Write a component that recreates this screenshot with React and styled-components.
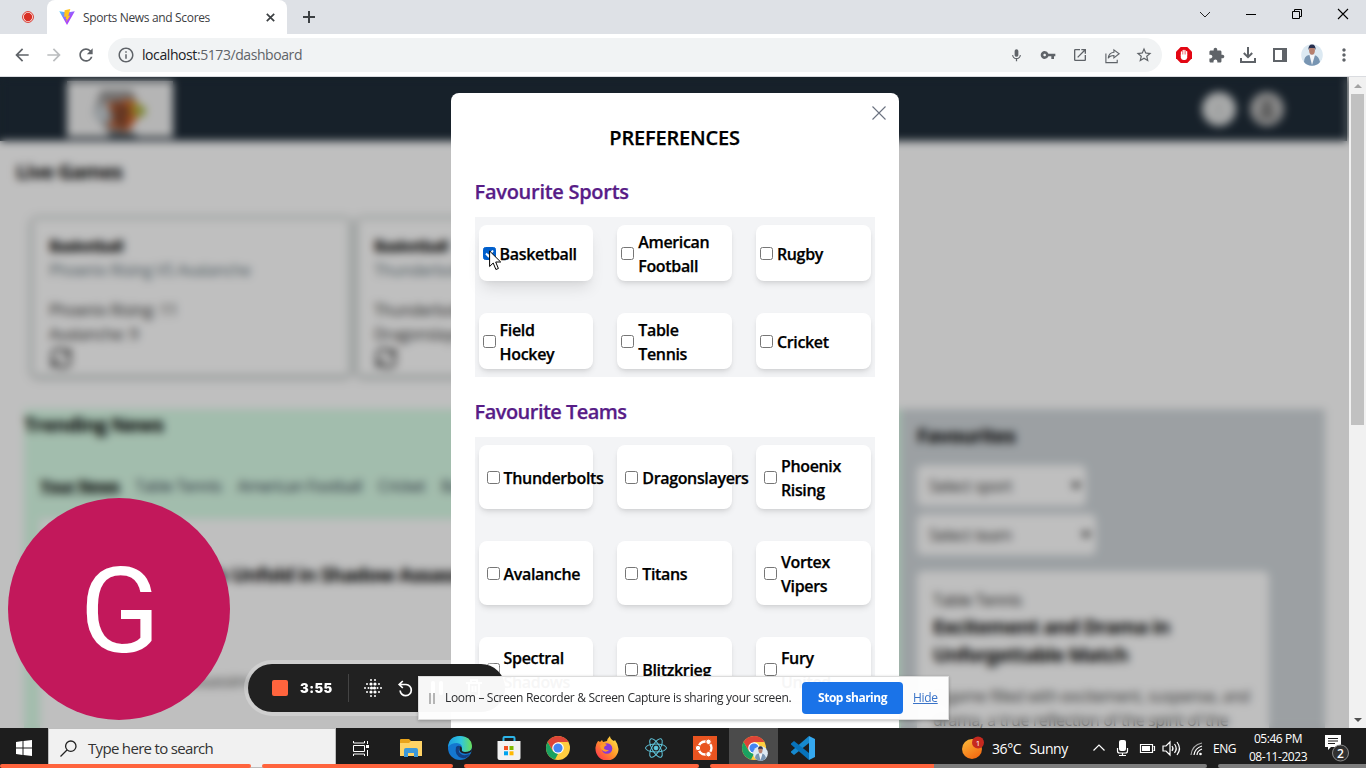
import React from "react";
import styled, { createGlobalStyle } from "styled-components";
import {
  MdArrowBack, MdArrowForward, MdRefresh, MdInfoOutline, MdMic, MdVpnKey, MdOpenInNew,
  MdStarBorder, MdMoreVert,
} from "react-icons/md";

const GlobalStyle = createGlobalStyle`
  * { box-sizing: border-box; }
  body { margin: 0; overflow: hidden; font-family: "Open Sans", "Noto Sans", sans-serif; }
  h1, h2, h3, p { margin: 0; }
  svg { display: block; flex-shrink: 0; }
`;

/* ---------- browser window ---------- */
const Desktop = styled.div`
  position: relative;
  width: 1366px;
  height: 768px;
  overflow: hidden;
  display: flex;
  flex-direction: column;
  background: #fff;
`;
const TabStrip = styled.header`
  height: 34px;
  flex: none;
  display: flex;
  background: #dee1e6;
`;
const PinnedTab = styled.div`
  width: 47px;
  padding: 11px 0 0 22px;
`;
const Tab = styled.div`
  width: 240px;
  height: 34px;
  display: flex;
  align-items: center;
  padding: 0 12px 0 12px;
  background: #fff;
  border-radius: 8px 8px 0 0;
  color: #3c4043;
`;
const TabTitle = styled.span`
  flex: 1;
  margin-left: 8px;
  font-size: 12px;
  letter-spacing: -0.34px;
  white-space: nowrap;
`;
const NewTab = styled.div`
  padding: 11px 0 0 16px;
  flex: 1;
`;
const WindowButtons = styled.div`
  display: flex;
  padding: 7px 15px 0 0;
  gap: 30px;
`;
const Toolbar = styled.div`
  height: 43px;
  flex: none;
  display: flex;
  align-items: center;
  padding: 0 6px 0 12px;
  border-bottom: 1px solid #dadce0;
  background: #fff;
  color: #5f6368;
`;
const NavButtons = styled.div`
  display: flex;
  gap: 12px;
  margin-right: 12px;
`;
const AddressBar = styled.div`
  width: 1054px;
  height: 34px;
  border-radius: 17px;
  background: #f1f3f4;
  display: flex;
  align-items: center;
  padding: 0 2px 0 9px;
`;
const Url = styled.span`
  flex: 1;
  margin-left: 7px;
  padding-bottom: 1px;
  font-size: 14px;
  letter-spacing: -0.42px;
  color: #5f6368;
  b { font-weight: 400; color: #202124; }
`;
const IconRow = styled.div`
  display: flex;
  align-items: center;
  margin-left: ${(p) => p.$left || 0}px;
`;
const IconSlot = styled.span`
  width: 32px;
  display: flex;
  justify-content: center;
`;
const Viewport = styled.div`
  position: relative;
  height: 651px;
  display: flex;
  overflow: hidden;
`;
const ScrollBar = styled.div`
  width: 17px;
  height: 651px;
  background: #f1f1f1;
  display: flex;
  flex-direction: column;
  align-items: center;
  padding: 7px 0 6px;
`;
const ScrollThumb = styled.div`
  width: 13px;
  height: 331px;
  margin: 6px 0 auto;
  background: #c1c1c1;
`;
const Arrow = styled.i`
  border: 4px solid transparent;
  border-width: ${(p) => (p.$down ? "4px 4px 0" : "0 4px 4px")};
  border-top-color: ${(p) => (p.$down ? "#505050" : "transparent")};
  border-bottom-color: ${(p) => (p.$down ? "transparent" : "#a3a3a3")};
`;

/* ---------- dashboard page ---------- */
const Page = styled.div`
  position: relative;
  width: 1349px;
  height: 651px;
  overflow: hidden;
  background: #fff;
  color: #000;
  font-size: 16px;
  line-height: 24px;
  letter-spacing: -0.37px;
`;
const SiteHeader = styled.div`
  width: 1347px;
  height: 64px;
  background: #1f2c38;
  display: flex;
  align-items: center;
  justify-content: space-between;
  padding: 0 63px 0 67px;
`;
const SiteLogo = styled.div`
  width: 106px;
  height: 56px;
  background: #f2f2f2;
  padding-left: 22px;
`;
const HeaderIcons = styled.div`
  display: flex;
  gap: 14px;
`;
const SectionTitle = styled.h2`
  font-size: 20px;
  line-height: 28px;
  font-weight: 700;
  letter-spacing: -0.75px;
`;
const LiveSection = styled.section`
  padding: 17px 16px 0;
`;
const GameRow = styled.div`
  display: flex;
  gap: 7px;
  padding: 32px 16px 0;
`;
const GameCard = styled.article`
  width: 318px;
  height: 158px;
  border: 2px solid #dfe4e2;
  border-radius: 6px;
  padding: 14px 15px;
  box-shadow: 0 1px 5px 2px rgba(60, 80, 75, 0.33);
  h3 { font-size: 16px; font-weight: 700; letter-spacing: -1.05px; }
  p { color: #333; }
`;
const Versus = styled.p`
  && { color: #60727a; margin-bottom: 16px; }
`;
const Columns = styled.div`
  display: flex;
  padding: 33px 24px 0;
`;
const Trending = styled.section`
  width: 877px;
  height: 600px;
  background: #d9fce7;
  padding-top: 2px;
`;
const NewsTabs = styled.nav`
  display: flex;
  gap: 16px;
  padding: 35px 16px 0;
  color: #374151;
  white-space: nowrap;
  letter-spacing: -0.62px;
  b { color: #000; text-decoration: underline; letter-spacing: -0.75px; }
`;
const NewsPanel = styled.div`
  margin: 21px 16px 0;
  height: 500px;
  background: #fff;
  padding: 42px 38px;
  p { margin-top: 80px; color: #555; padding-left: 46px; }
`;
const FavPanel = styled.section`
  width: 424px;
  height: 600px;
  background: #d0d6da;
  padding: 13px 16px;
`;
const Select = styled.div`
  width: ${(p) => p.$width}px;
  height: 41px;
  margin-top: ${(p) => p.$top}px;
  padding: 0 5px 0 12px;
  display: flex;
  align-items: center;
  justify-content: space-between;
  border-radius: 6px;
  background: #fff;
  color: #333;
`;
const SelectArrow = styled.i`
  border: 5px solid transparent;
  border-width: 6px 5px 0;
  border-top-color: #111;
`;
const FavArticle = styled.article`
  width: 352px;
  height: 300px;
  margin-top: 16px;
  padding: 17px 16px;
  border-radius: 6px;
  background: #fff;
  h3 { font-size: 20px; line-height: 28px; letter-spacing: -0.72px; margin: 1px 0 15px; }
  p { color: #444; white-space: nowrap; letter-spacing: -0.41px; }
`;
const Category = styled.p`
  && { color: #1c1c1c; }
`;
const Backdrop = styled.div`
  position: absolute;
  inset: 0;
  background: rgba(0, 0, 0, 0.25);
  backdrop-filter: blur(4px);
`;

/* ---------- preferences dialog ---------- */
const Dialog = styled.div`
  position: absolute;
  left: 450.6px;
  top: 16px;
  width: 448px;
  height: 700px;
  padding: 0 24px;
  border-radius: 8px;
  background: #fff;
  font-size: 16px;
  line-height: 24px;
`;
const DialogClose = styled.div`
  display: flex;
  justify-content: flex-end;
  height: 31px;
  margin-right: -11.4px;
  padding-top: 13px;
`;
const DialogTitle = styled.h1`
  font-size: 20px;
  line-height: 28px;
  font-weight: 600;
  letter-spacing: -0.18px;
  -webkit-text-stroke: 0.25px #000;
  text-align: center;
`;
const GroupTitle = styled.h2`
  margin: ${(p) => p.$top}px 0 11px;
  font-size: 20px;
  line-height: 28px;
  font-weight: 600;
  letter-spacing: ${(p) => p.$spacing}px;
  -webkit-text-stroke: 0.25px #581c87;
  color: #581c87;
`;
const OptionGrid = styled.div`
  display: grid;
  grid-template-columns: repeat(3, minmax(0, 1fr));
  gap: 32px 24px;
  padding: 8px 4px;
  background: #f3f4f6;
`;
const Option = styled.label`
  height: ${(p) => (p.$pad ? 64 : 56)}px;
  padding: 0 ${(p) => (p.$pad ? 8 : 4)}px;
  display: flex;
  align-items: center;
  gap: 4px;
  border-radius: 8px;
  background: #fff;
  font-weight: 600;
  letter-spacing: -0.34px;
  -webkit-text-stroke: 0.25px #000;
  box-shadow: ${(p) => (p.$raised
    ? "0 10px 15px -3px rgba(0,0,0,.1), 0 4px 6px -4px rgba(0,0,0,.1)"
    : "0 4px 6px -1px rgba(0,0,0,.1), 0 2px 4px -2px rgba(0,0,0,.1)")};
`;
const OptionName = styled.span`
  padding-top: 1px;
`;
const Check = styled.span`
  flex: none;
  width: 13px;
  height: 13px;
  border: 1px solid ${(p) => (p.$on ? "#005fcc" : "#767676")};
  border-radius: 2.5px;
  background: ${(p) => (p.$on ? "#005fcc" : "#fff")};
`;

/* ---------- recorder overlays ---------- */
const Avatar = styled.div`
  position: absolute;
  left: 8px;
  top: 498px;
  width: 222px;
  height: 222px;
  padding-left: 2px;
  border-radius: 50%;
  background: #c2185b;
  color: #fff;
  font: 400 118px/228px Roboto, sans-serif;
  text-align: center;
`;
const Recorder = styled.div`
  position: absolute;
  left: 248px;
  top: 664px;
  width: 257px;
  height: 48px;
  border-radius: 24px;
  background: #212121;
  box-shadow: 0 0 0 4px rgba(255, 255, 255, 0.25);
  display: flex;
  align-items: center;
  padding-left: 24px;
  color: #fff;
`;
const StopSquare = styled.i`
  width: 16px;
  height: 16px;
  border-radius: 2px;
  background: #ff643d;
`;
const Timer = styled.span`
  width: 48px;
  margin-left: 12px;
  font: 900 13px/16px Inter, sans-serif;
  letter-spacing: 0.45px;
`;
const RecorderRule = styled.i`
  width: 1px;
  height: 28px;
  background: #444;
  margin-right: 15px;
`;
const RecorderTools = styled.div`
  display: flex;
  align-items: center;
`;
const Tool = styled.span`
  margin-left: ${(p) => p.$gap}px;
`;
const ShareBar = styled.div`
  position: absolute;
  left: 418px;
  top: 676px;
  width: 531px;
  height: 44px;
  display: flex;
  align-items: center;
  padding-left: 10px;
  border: 1px solid #dcdcdc;
  background: rgba(255, 255, 255, 0.965);
  box-shadow: 0 1px 3px rgba(0, 0, 0, 0.25);
  font-size: 12px;
  letter-spacing: -0.31px;
  color: #2b2c2e;
  white-space: nowrap;
`;
const Grip = styled.i`
  width: 6px;
  height: 11px;
  border: solid #b5b5b5;
  border-width: 0 2px;
  margin-right: 10px;
`;
const ShareText = styled.span`
  width: 357px;
  padding-bottom: 1px;
`;
const StopButton = styled.button`
  width: 101px;
  height: 32px;
  padding: 0 0 1px;
  border: 0;
  border-radius: 4px;
  background: #1a73e8;
  color: #fff;
  font: 700 12px "Open Sans", sans-serif;
  letter-spacing: -0.5px;
`;
const HideLink = styled.span`
  margin-left: 10px;
  padding-bottom: 1px;
  color: #3973c8;
  text-decoration: underline;
`;
const Progress = styled.div`
  position: absolute;
  left: 0;
  top: 764px;
  width: 1366px;
  height: 4px;
  display: flex;
  gap: 11px;
`;
const Segment = styled.i`
  flex: none;
  width: ${(p) => p.$width}px;
  border-radius: 2px;
  background: linear-gradient(90deg, #ff643d ${(p) => p.$filled}px, #7d7d7d ${(p) => p.$filled}px);
`;
const Pointer = styled.svg`
  position: absolute;
  left: 489px;
  top: 250px;
`;

/* ---------- taskbar ---------- */
const Taskbar = styled.footer`
  height: 40px;
  flex: none;
  display: flex;
  background: #1d1d1d;
  color: #fff;
`;
const StartButton = styled.div`
  width: 48px;
  padding: 12px 0 0 16px;
`;
const SearchBox = styled.div`
  width: 288px;
  height: 40px;
  display: flex;
  align-items: center;
  gap: 11px;
  padding-left: 11px;
  border: 1px solid #bdbdbd;
  background: #f1f1f1;
  color: #333;
  font-size: 15px;
  letter-spacing: -0.68px;
`;
const Apps = styled.div`
  display: flex;
  flex: 1;
`;
const AppButton = styled.div`
  width: ${(p) => p.$width || 49}px;
  height: 40px;
  display: flex;
  justify-content: center;
  align-items: center;
  background: ${(p) => (p.$active ? "#4b4b4b" : "transparent")};
`;
const Tray = styled.div`
  display: flex;
  align-items: center;
  width: 404px;
  font-size: 14px;
  white-space: nowrap;
`;
const Weather = styled.span`
  width: 77px;
  margin: 0 24px 0 8px;
  letter-spacing: -0.4px;
  word-spacing: 5px;
`;
const Language = styled.span`
  width: 23px;
  margin: 0 12px 0 10px;
  font-size: 12px;
  letter-spacing: -0.5px;
`;
const Clock = styled.span`
  width: 60px;
  margin-right: 17px;
  font-size: 12px;
  line-height: 18px;
  letter-spacing: -0.45px;
  text-align: center;
`;

/* ---------- drawings ---------- */
const RecordIcon = () => (
  <svg width="12" height="12" viewBox="0 0 12 12"><circle cx="6" cy="6" r="5.4" fill="#fff" stroke="#d93025" strokeWidth="1" /><circle cx="6" cy="6" r="4.2" fill="#d93025" /></svg>
);
const ViteIcon = () => (
  <svg width="16" height="16" viewBox="0 0 16 16">
    <defs><linearGradient id="vite" x1="0" y1="0" x2="1" y2="1"><stop stopColor="#41d1ff" /><stop offset=".55" stopColor="#a24bfd" /><stop offset="1" stopColor="#bd34fe" /></linearGradient></defs>
    <path d="M.3 2.2 8 16 15.8 2.2 8 3.6Z" fill="url(#vite)" /><path d="M11.3.1 5.6 1.2 5.2 8l2-.4-.6 2.7 1.3-.4-.8 3.4 4.2-6.8-2 .4Z" fill="#ffc31f" />
  </svg>
);
const TabClose = () => <svg width="9" height="9" viewBox="0 0 9 9" stroke="#3c4043" strokeWidth="1.7"><path d="m.8.8 7.4 7.4M8.200.8.8 8.200" /></svg>;
const Plus = () => <svg width="12" height="12" viewBox="0 0 12 12" stroke="#3c4043" strokeWidth="2"><path d="M6 0v12M0 6h12" /></svg>;
const ShareIcon = () => (
  <svg width="17" height="17" viewBox="0 0 18 18" fill="none" stroke="#5f6368" strokeWidth="1.2"><path d="M2 7v9.500h12v-3M10.500 3l5.500 4.200-5.500 4.300V9C7.500 9 5.500 10 4.500 12c.2-3.500 2-6 6-6.500Z" /></svg>
);
const AdblockIcon = () => (
  <svg width="16" height="16" viewBox="0 0 16 16"><path d="M4.700 0h6.600L16 4.700v6.600L11.300 16H4.700L0 11.300V4.700Z" fill="#e30613" /><path d="M5.500 9V4.800M7.200 8V3.300M8.900 8V3.300M10.600 8V4.600" stroke="#fff" strokeWidth="1.300" strokeLinecap="round" /><path d="M4.800 7.500h6.400v3.300q-.5 2.300-2.400 2.300H7.500Q5.500 13 4.800 10.800Z" fill="#fff" /></svg>
);
const ExtensionIcon = () => (
  <svg width="17" height="17" viewBox="0 0 24 24" fill="#5f6368"><path d="M20.500 11H19V7c0-1.100-.9-2-2-2h-4V3.500C13 2.120 11.880 1 10.500 1S8 2.120 8 3.500V5H4c-1.100 0-1.990.9-1.990 2v3.800H3.500c1.490 0 2.700 1.210 2.700 2.700s-1.210 2.700-2.700 2.700H2V20c0 1.100.9 2 2 2h3.800v-1.500c0-1.490 1.210-2.700 2.700-2.700s2.700 1.210 2.700 2.700V22H17c1.100 0 2-.9 2-2v-4h1.500c1.380 0 2.500-1.120 2.500-2.500S21.880 11 20.500 11z" /></svg>
);
const DownloadIcon = () => (
  <svg width="18" height="18" viewBox="0 0 18 18" fill="none" stroke="#5f6368" strokeWidth="2"><path d="M9 1v10M4.800 7 9 11.200 13.200 7M2 12v4h14v-4" /></svg>
);
const PanelIcon = () => (
  <svg width="14" height="14" viewBox="0 0 14 14"><path d="M0 0h14v14H0zM2 2v10h7V2z" fill="#5f6368" fillRule="evenodd" /></svg>
);
const Portrait = ({ size = 22 }) => (
  <svg width={size} height={size} viewBox="0 0 22 22"><circle cx="11" cy="11" r="10.800" fill="#dce9f2" /><path d="M3 18q0-6 5-7h5q5 1 6 7-3 3.800-8 3.800T3 18Z" fill="#7895b2" /><path d="m8.500 11 2.500 10 3-10Z" fill="#f4f5f8" /><ellipse cx="11" cy="6.300" rx="2.900" ry="4.400" fill="#b77f6d" /><path d="M7.500 6Q7 .4 11 .4T14.500 6L13.500 4h-5Z" fill="#28304f" /></svg>
);
const CaretDown = () => <svg width="16" height="16" viewBox="0 0 16 16" fill="none" stroke="#222"><path d="m3 5 5 5 5-5" /></svg>;
const Minimize = () => <svg width="16" height="16" viewBox="0 0 16 16"><path d="M3 7.500h10" stroke="#000" /></svg>;
const Restore = () => <svg width="16" height="16" viewBox="0 0 16 16" fill="none" stroke="#000"><path d="M3.500 4.500h7v7h-7zM5.500 4.500v-2h7v7h-2" /></svg>;
const CloseWindow = () => <svg width="16" height="16" viewBox="0 0 16 16" stroke="#000" strokeWidth="1.100"><path d="m3 2 10 10M13 2 3 12" /></svg>;

const LogoDrawing = () => (
  <svg width="62" height="56" viewBox="0 0 62 56"><path d="M12 9h31l6 14-8 26-8 7H22l-9-13-9-10Z" fill="#999" /><path d="M4 30l12-9 15 8-10 11H9Z" fill="#c7cfd4" /><path d="m17 22 27-4 8 14-13 18-20-4 7-12Z" fill="#c95a28" /><path d="m21 31 8 6 12-9M25 23l10 5M28 45l10-5" stroke="#493c37" strokeWidth="4" fill="none" /><path d="m41 19 11 6-10 13Z" fill="#d9921c" /><circle cx="51" cy="30" r="6" fill="#a4b444" /><path d="M20 52h27v4H20z" fill="#4b5961" /></svg>
);
const HeaderDisc = ({ color, inner }) => <svg width="34" height="34" viewBox="0 0 34 34"><circle cx="17" cy="17" r="17" fill={color} /><circle cx="17" cy="13" r="5" fill={inner} /><path d="M9 26q1-8 8-8t8 8Z" fill={inner} /></svg>;
const RefreshDrawing = () => <svg width="24" height="24" viewBox="0 0 24 24" fill="none" stroke="#111" strokeWidth="2.100"><path d="M2 11Q3 3 11 3q5 0 9 5M21 3v6h-6M22 13q-1 8-9 8-5 0-9-5M3 21v-6h6" /></svg>;
const CheckMark = () => <svg width="11" height="11" viewBox="0 0 11 11" fill="none" stroke="#fff" strokeWidth="2"><path d="m2 5.500 2.500 2.700L9 2.500" /></svg>;

const DotsIcon = () => (
  <svg width="18" height="18" viewBox="0 0 18 18" fill="#fff">
    {[[7, 1], [11, 1], [3, 5], [7, 5], [11, 5], [15, 5], [1, 9], [4.5, 9], [7.5, 9], [10.5, 9], [13.5, 9], [17, 9], [3, 13], [7, 13], [11, 13], [15, 13], [7, 17], [11, 17]].map(([x, y]) => (
      <circle key={`${x}-${y}`} cx={x} cy={y} r={x > 5 && x < 13 && y > 3 && y < 15 ? 1.6 : 1} />
    ))}
  </svg>
);
const RestartIcon = () => <svg width="16" height="17" viewBox="0 0 16 17" fill="none" stroke="#fff" strokeWidth="1.7"><path d="M2.500 4.500H9a5.600 5.600 0 1 1-5.900 6M5.800 1 2.200 4.500l3.600 3.500" /></svg>;
const PauseIcon = () => <svg width="14" height="16" viewBox="0 0 14 16" stroke="#fff" strokeWidth="4" strokeLinecap="round"><path d="M3 3v10M11 3v10" /></svg>;
const TrashIcon = () => <svg width="16" height="18" viewBox="0 0 16 18" fill="none" stroke="#fff" strokeWidth="2"><path d="M0 4h16M5 4V1h6v3M3 4v13h10V4M6.500 7v6M9.500 7v6" /></svg>;

const TaskView = () => <svg width="18" height="17" viewBox="0 0 18 17" fill="none" stroke="#fff"><path d="M1.500 1v2h11V1M1.500 5.500h11v6h-11zM1.500 16v-2h11v2M15.500 1v3M15.500 10v6" /><path d="M14 5h3v3h-3z" fill="#fff" stroke="none" /></svg>;
const Explorer = () => <svg width="22" height="18" viewBox="0 0 22 18"><path d="M0 1q0-1 1-1h8l2 2h10q1 0 1 1v4H0Z" fill="#eaa41b" /><path d="M0 4h9l2-2h11v15H0Z" fill="#ffd365" /><path d="M4 18v-7q0-2 2-2h10q2 0 2 2v7h-4v-4H8v4Z" fill="#3d98d8" /></svg>;
const Edge = () => (
  <svg width="24" height="24" viewBox="0 0 24 24"><defs><linearGradient id="edge"><stop stopColor="#1b9de2" /><stop offset=".55" stopColor="#31c6dc" /><stop offset="1" stopColor="#6bdf55" /></linearGradient></defs>
    <circle cx="12" cy="12" r="12" fill="#1477cf" /><path d="M0 11Q1 0 12 0t12 10q0 6-7 6-4 0-3-3 1-5-5-6-6 0-9 4Z" fill="url(#edge)" /><path d="M8 11q-2 9 6 11 5 1 8-4-8 3-11-2-1-3 1-6-2-1-4 1Z" fill="#123f83" /><path d="M12 10q-2 5 2 7 5 2 9-1 1-1 1-4-1 4-7 4-4 0-3-3 0-2-2-3Z" fill="#1d1d1d" /></svg>
);
const Store = () => <svg width="24" height="24" viewBox="0 0 24 24"><path d="M6.500 6V2q0-1 1-1h9q1 0 1 1v4" fill="none" stroke="#2cb4e8" strokeWidth="2" /><path d="M.5 5h23v17q0 2-2 2h-19q-2 0-2-2Z" fill="#f2f2f2" /><path d="M7 10h4v4H7z" fill="#f25022" /><path d="M12.500 10h4v4h-4z" fill="#7fba00" /><path d="M7 15.300h4v4H7z" fill="#00a4ef" /><path d="M12.500 15.300h4v4h-4z" fill="#ffb900" /></svg>;
const Chrome = ({ withPortrait }) => (
  <svg width="24" height="24" viewBox="0 1 24 24" overflow="visible"><circle cx="12" cy="13" r="12" fill="#ffcd40" /><path d="M1.600 7A12 12 0 0 1 22.400 7H12L6.800 16Z" fill="#dd4437" /><path d="M1.600 7 6.800 16 12 19l-3 5.600A12 12 0 0 1 1.600 7Z" fill="#1ba261" /><circle cx="12" cy="13" r="5.800" fill="#fff" /><circle cx="12" cy="13" r="4.600" fill="#4285f4" />{withPortrait && <g transform="translate(11 11)"><Portrait size={15} /></g>}</svg>
);
const Firefox = () => (
  <svg width="24" height="24" viewBox="0 0 24 24"><defs><linearGradient id="fox" x1="1" y1="0" x2="0" y2="1"><stop stopColor="#fff44f" /><stop offset=".5" stopColor="#ff9328" /><stop offset="1" stopColor="#ff2457" /></linearGradient></defs><path d="M3 5q1 0 2 1l2-2 1 2 4-1q0-2 3-5 0 3 4 5l1-1q3 4 3.500 9A11.500 11.500 0 0 1 .5 13Q0 9 3 5Z" fill="url(#fox)" /><circle cx="12" cy="12.500" r="5.300" fill="#8738d8" /><path d="M5 10q3-4 7-1-3 1-3 3t5 2q-4 4-8-1Z" fill="#ff9a29" /></svg>
);
const ReactMark = () => <svg width="22" height="22" viewBox="-11 -11 22 22" fill="none" stroke="#61c9df" strokeWidth="1"><circle r="1.900" fill="#61c9df" /><ellipse rx="10.500" ry="4" /><ellipse rx="10.500" ry="4" transform="rotate(60)" /><ellipse rx="10.500" ry="4" transform="rotate(120)" /></svg>;
const Ubuntu = () => <svg width="24" height="24" viewBox="0 0 24 24"><path fill="#e95420" d="M0 0h24v24H0z" /><circle cx="12" cy="12" r="6.500" fill="none" stroke="#fff" strokeWidth="2.300" />{[[5, 12], [15.500, 5.800], [15.500, 18.200]].map(([x, y]) => <circle key={y} cx={x} cy={y} r="2.700" fill="#fff" stroke="#e95420" strokeWidth="1" />)}</svg>;
const VsCode = () => <svg width="24" height="24" viewBox="0 0 24 24"><path d="m18 0 6 3v18l-6 3Z" fill="#35a8ef" /><path d="M18 0v7L3 19l-3-2.500v-1Z" fill="#1689ce" /><path d="M18 24v-7L3 5 0 7.500v1Z" fill="#0873bb" /></svg>;
const WindowsMark = () => <svg width="16" height="16" viewBox="0 0 16 16" fill="#fff"><path d="m0 2 6.500-1v6.500H0ZM7.500.9 16 0v7.500H7.500ZM0 8.500h6.500V15L0 14ZM7.500 8.500H16V16l-8.500-1Z" /></svg>;
const SearchIcon = () => <svg width="17" height="17" viewBox="0 0 17 17" fill="none" stroke="#222" strokeWidth="1.300"><circle cx="10.800" cy="6.200" r="5.200" /><path d="m7 10-6.500 6.500" /></svg>;
const Sun = () => <svg width="22" height="24" viewBox="0 0 22 24"><defs><linearGradient id="sun" x2=".6" y2="1"><stop stopColor="#fbbd3c" /><stop offset="1" stopColor="#f46c12" /></linearGradient></defs><circle cx="10" cy="13" r="10" fill="url(#sun)" /><circle cx="16" cy="6.500" r="6" fill="#c5291f" /><text x="16" y="9.500" textAnchor="middle" fontSize="8" fill="#fff">1</text></svg>;
const TrayIcons = () => (
  <svg width="110" height="24" viewBox="0 0 110 24" fill="none" stroke="#fff" strokeWidth="1.200">
    <path d="m.5 14.500 5.500-5.500 5.500 5.500" /><rect x="26" y="4" width="7" height="11" rx="2" fill="#fff" stroke="none" /><path d="M24.500 12v3q0 2 2 2h6q2 0 2-2v-3M29.500 17v3M26 19.500h7" />
    <path d="M47.500 8.500h12v8h-12zM60.500 10.500h1v4h-1" /><path d="M49 10h8v5h-8z" fill="#fff" stroke="none" />
    <path d="M70 10h3l4-4v13l-4-4h-3zM79 10q2 2.500 0 5M81.500 8q3.500 4.500 0 9M84 6q5 6.500 0 13" />
    <g stroke="#aaa"><path d="M98 19Q99 9 109 7" /><path d="M101 19q1-7 8-9M104 19q0-4 5-6" stroke="#fff" /></g><circle cx="107.500" cy="18" r="1.300" fill="#fff" stroke="none" />
  </svg>
);
const Notifications = () => <svg width="26" height="28" viewBox="0 -1 26 28"><path d="M0 0h16v12H6l-3 3v-3H0Z" fill="#fff" /><path d="M3 3.500h10M3 6h10M3 8.500h7" stroke="#1d1d1d" /><circle cx="15.500" cy="18" r="8" fill="#303030" stroke="#8a8a8a" /><text x="15.500" y="22.500" textAnchor="middle" fontSize="12" fontWeight="600" fill="#fff">2</text></svg>;

const SPORTS = ["Basketball", "American Football", "Rugby", "Field Hockey", "Table Tennis", "Cricket"];
const TEAMS = ["Thunderbolts", "Dragonslayers", "Phoenix Rising", "Avalanche", "Titans", "Vortex Vipers", "Spectral Shadows", "Blitzkrieg", "Fury United"];
const GAMES = [["Phoenix Rising", 11, "Avalanche", 9], ["Thunderbolts", 8, "Dragonslayers", 6]];

function PreferenceOption({ name, checked, roomy }) {
  return (
    <Option $pad={roomy} $raised={checked}>
      <Check $on={checked}>{checked && <CheckMark />}</Check>
      <OptionName>{name}</OptionName>
    </Option>
  );
}

export default function App() {
  return (
    <>
      <GlobalStyle />
      <Desktop>
        <TabStrip>
          <PinnedTab><RecordIcon /></PinnedTab>
          <Tab><ViteIcon /><TabTitle>Sports News and Scores</TabTitle><TabClose /></Tab>
          <NewTab><Plus /></NewTab>
          <WindowButtons><CaretDown /><Minimize /><Restore /><CloseWindow /></WindowButtons>
        </TabStrip>
        <Toolbar>
          <NavButtons><MdArrowBack size={20} /><MdArrowForward size={20} color="#bbbdbf" /><MdRefresh size={20} /></NavButtons>
          <AddressBar>
            <MdInfoOutline size={18} />
            <Url><b>localhost</b>:5173/dashboard</Url>
            <IconRow>
              <IconSlot><MdMic size={15} /></IconSlot>
              <IconSlot><MdVpnKey size={16} /></IconSlot>
              <IconSlot><MdOpenInNew size={16} /></IconSlot>
              <IconSlot><ShareIcon /></IconSlot>
              <IconSlot><MdStarBorder size={18} /></IconSlot>
            </IconRow>
          </AddressBar>
          <IconRow $left={6}>
            <IconSlot><AdblockIcon /></IconSlot>
            <IconSlot><ExtensionIcon /></IconSlot>
            <IconSlot><DownloadIcon /></IconSlot>
            <IconSlot><PanelIcon /></IconSlot>
            <IconSlot><Portrait /></IconSlot>
            <IconSlot><MdMoreVert size={20} /></IconSlot>
          </IconRow>
        </Toolbar>
        <Viewport>
          <Page>
            <SiteHeader>
              <SiteLogo><LogoDrawing /></SiteLogo>
              <HeaderIcons><HeaderDisc color="#e2e4e4" inner="#d6d8d8" /><HeaderDisc color="#b9b9b9" inner="#707070" /></HeaderIcons>
            </SiteHeader>
            <LiveSection>
              <SectionTitle>Live Games</SectionTitle>
              <GameRow>
                {GAMES.map(([home, homeScore, away, awayScore]) => (
                  <GameCard key={home}>
                    <h3>Basketball</h3>
                    <Versus>{home} VS {away}</Versus>
                    <p>{home}: {homeScore}</p>
                    <p>{away}: {awayScore}</p>
                    <RefreshDrawing />
                  </GameCard>
                ))}
              </GameRow>
            </LiveSection>
            <Columns>
              <Trending>
                <SectionTitle>Trending News</SectionTitle>
                <NewsTabs><b>Your News</b><span>Table Tennis</span><span>American Football</span><span>Cricket</span><span>Basketball</span></NewsTabs>
                <NewsPanel><SectionTitle>Thrills and Spills Unfold in Shadow Assassins Match</SectionTitle><p>Shadow Assassins</p></NewsPanel>
              </Trending>
              <FavPanel>
                <SectionTitle>Favourites</SectionTitle>
                <Select $width={169} $top={15}>Select sport<SelectArrow /></Select>
                <Select $width={179} $top={8}>Select team<SelectArrow /></Select>
                <FavArticle>
                  <Category>Table Tennis</Category>
                  <h3>Excitement and Drama in Unforgettable Match</h3>
                  <p>A game filled with excitement, suspense, and<br />drama, a true reflection of the spirit of the</p>
                </FavArticle>
              </FavPanel>
            </Columns>
            <Backdrop />
            <Dialog>
              <DialogClose><svg width="14" height="14" viewBox="0 0 14 14" stroke="#6b7280" strokeWidth="1.1"><path d="m.5.5 13 13M13.500.5l-13 13" /></svg></DialogClose>
              <DialogTitle>PREFERENCES</DialogTitle>
              <GroupTitle $top={26} $spacing={-0.28}>Favourite Sports</GroupTitle>
              <OptionGrid>{SPORTS.map((name, i) => <PreferenceOption key={name} name={name} checked={i === 0} />)}</OptionGrid>
              <GroupTitle $top={21} $spacing={-0.53}>Favourite Teams</GroupTitle>
              <OptionGrid>{TEAMS.map((name) => <PreferenceOption key={name} name={name} roomy />)}</OptionGrid>
            </Dialog>
          </Page>
          <ScrollBar><Arrow /><ScrollThumb /><Arrow $down /></ScrollBar>
        </Viewport>
        <Taskbar>
          <StartButton><WindowsMark /></StartButton>
          <SearchBox><SearchIcon />Type here to search</SearchBox>
          <Apps>
            <AppButton $width={50}><TaskView /></AppButton>
            <AppButton><Explorer /></AppButton>
            <AppButton><Edge /></AppButton>
            <AppButton><Store /></AppButton>
            <AppButton><Chrome /></AppButton>
            <AppButton><Firefox /></AppButton>
            <AppButton><ReactMark /></AppButton>
            <AppButton><Ubuntu /></AppButton>
            <AppButton $active><Chrome withPortrait /></AppButton>
            <AppButton><VsCode /></AppButton>
          </Apps>
          <Tray><Sun /><Weather>36°C Sunny</Weather><TrayIcons /><Language>ENG</Language><Clock>05:46 PM<br />08-11-2023</Clock><Notifications /></Tray>
        </Taskbar>

        <Avatar>G</Avatar>
        <Recorder>
          <StopSquare /><Timer>3:55</Timer><RecorderRule />
          <RecorderTools>
            <DotsIcon />
            <Tool $gap={15}><RestartIcon /></Tool>
            <Tool $gap={17}><PauseIcon /></Tool>
            <Tool $gap={22}><TrashIcon /></Tool>
          </RecorderTools>
        </Recorder>
        <ShareBar><Grip /><ShareText>Loom – Screen Recorder &amp; Screen Capture is sharing your screen.</ShareText><StopButton>Stop sharing</StopButton><HideLink>Hide</HideLink></ShareBar>
        <Progress><Segment $width={251} $filled={251} /><Segment $width={191} $filled={191} /><Segment $width={235} $filled={235} /><Segment $width={497} $filled={224} /><Segment $width={150} $filled={0} /></Progress>
        <Pointer width="13" height="21" viewBox="0 0 13 21"><path d="M.6 1v15.500l3.600-3.500 2.700 6.500 2.500-1L6.700 12h5Z" fill="#fff" stroke="#000" /></Pointer>
      </Desktop>
    </>
  );
}
